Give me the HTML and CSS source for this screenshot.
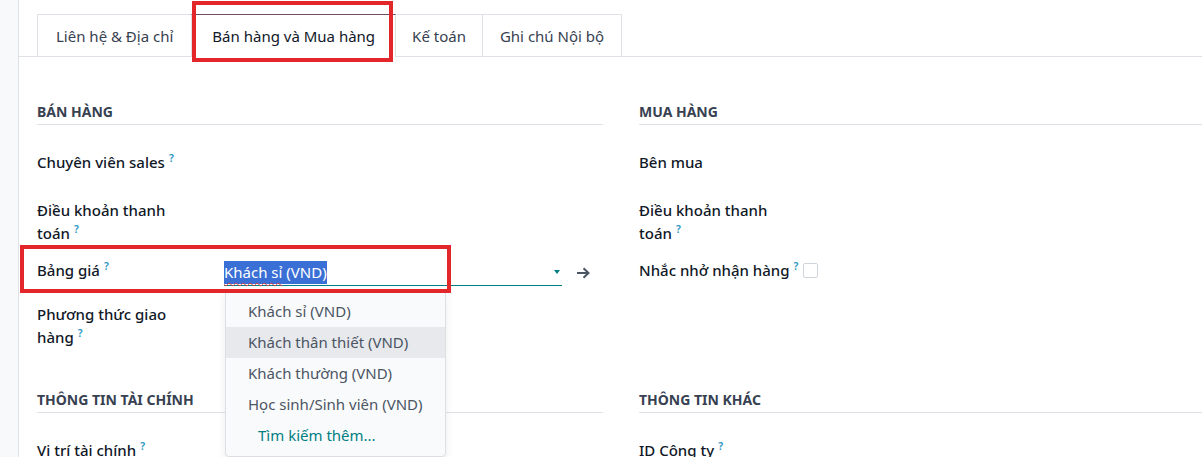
FILE: index.html
```html
<!DOCTYPE html>
<html lang="vi">
<head>
<meta charset="utf-8">
<title>Bán hàng và Mua hàng</title>
<link rel="stylesheet" href="styles.css">
</head>
<body>
<div class="app">
  <aside class="rail"></aside>
  <main class="sheet">
    <nav class="tabs">
      <a class="tab">Liên hệ &amp; Địa chỉ</a>
      <a class="tab active">Bán hàng và Mua hàng</a>
      <a class="tab">Kế toán</a>
      <a class="tab">Ghi chú Nội bộ</a>
      <span class="mark mark-tab"></span>
    </nav>
    <div class="groups">
      <section class="group">
        <h3 class="group-title">Bán hàng</h3>
        <div class="field">
          <div class="label">Chuyên viên sales<sup>?</sup></div>
          <div class="value"></div>
        </div>
        <div class="field">
          <div class="label">Điều khoản thanh toán<sup>?</sup></div>
          <div class="value"></div>
        </div>
        <div class="field field-input">
          <span class="mark mark-field"></span>
          <div class="label">Bảng giá<sup>?</sup></div>
          <div class="value value-input">
            <div class="input-wrap">
              <div class="input"><span class="sel"><span class="spell">Khách sỉ</span> (VND)</span><span class="caret"></span></div>
              <svg class="open-arrow" width="14" height="12" viewBox="0 0 14 12"><path d="M1 6H12.5M7.5 1.2L12.5 6L7.5 10.8" fill="none" stroke="#4b5563" stroke-width="2"/></svg>
            </div>
            <ul class="dropdown">
              <li>Khách sỉ (VND)</li>
              <li class="hover">Khách thân thiết (VND)</li>
              <li>Khách thường (VND)</li>
              <li>Học sinh/Sinh viên (VND)</li>
              <li class="more">Tìm kiếm thêm...</li>
            </ul>
          </div>
        </div>
        <div class="field last">
          <div class="label">Phương thức giao hàng<sup>?</sup></div>
          <div class="value"></div>
        </div>
      </section>
      <section class="group">
        <h3 class="group-title">Mua hàng</h3>
        <div class="field">
          <div class="label">Bên mua</div>
          <div class="value"></div>
        </div>
        <div class="field">
          <div class="label">Điều khoản thanh toán<sup>?</sup></div>
          <div class="value"></div>
        </div>
        <div class="field field-check last">
          <div class="label">Nhắc nhở nhận hàng<sup>?</sup></div>
          <span class="checkbox"></span>
        </div>
      </section>
      <section class="group">
        <h3 class="group-title">Thông tin tài chính</h3>
        <div class="field">
          <div class="label">Vị trí tài chính<sup>?</sup></div>
          <div class="value"></div>
        </div>
      </section>
      <section class="group">
        <h3 class="group-title">Thông tin khác</h3>
        <div class="field">
          <div class="label">ID Công ty<sup>?</sup></div>
          <div class="value"></div>
        </div>
      </section>
    </div>
  </main>
</div>
</body>
</html>
```

FILE: styles.css
```css
* { box-sizing: border-box; }
html, body {
  margin: 0;
  height: 457px;
  overflow: hidden;
  background: #fff;
}
body {
  font-family: "Noto Sans", "Open Sans", sans-serif;
  font-size: 15px;
  color: #111827;
}
.app {
  display: flex;
  height: 457px;
}
.rail {
  flex: none;
  width: 19px;
  background: #f8f9fa;
  border-right: 1px solid #dee2e6;
}
.sheet {
  flex: 1;
  min-width: 0;
  position: relative;
}
.tabs {
  position: relative;
  display: flex;
  align-items: flex-start;
  height: 57px;
  padding: 14px 0 0 18px;
  border-bottom: 1px solid #dee2e6;
}
.tab {
  display: flex;
  align-items: center;
  height: 42px;
  padding: 1px 18px 0;
  margin-right: -1px;
  border: 1px solid #dee2e6;
  border-bottom: none;
  color: #374151;
  background: #fff;
  white-space: nowrap;
}
.tab.active {
  height: 43px;
  margin-bottom: -1px;
  padding: 0 20px;
  border-top: 1px solid #714b67;
  color: #111827;
  position: relative;
  z-index: 1;
}
.tab:nth-child(3) { padding: 1px 16px 0; }
.tab:nth-child(4) { padding: 1px 17px 0; }
.mark {
  position: absolute;
  border: 4px solid #e3262a;
  pointer-events: none;
  z-index: 5;
}
.mark-tab {
  left: 173px;
  top: 1px;
  width: 201px;
  height: 61px;
}
.groups {
  display: grid;
  grid-template-columns: 566px 566px;
  column-gap: 36px;
  row-gap: 40px;
  padding: 44px 0 0 18px;
}
.group-title {
  margin: 0 0 26px;
  padding-bottom: 2px;
  border-bottom: 1px solid #dee2e6;
  font-size: 14px;
  line-height: 21px;
  font-weight: 700;
  text-transform: uppercase;
  color: #374151;
}
.field {
  position: relative;
  display: grid;
  grid-template-columns: 187px 1fr;
  margin-bottom: 14px;
  line-height: 23px;
}
.field.last { margin-bottom: 0; }
.label {
  max-width: 160px;
  font-weight: 500;
  color: #111827;
}
.label sup {
  margin-left: 4px;
  font-size: 10.5px;
  font-weight: 600;
  color: #2b95c4;
  vertical-align: 6px;
  line-height: 0;
}
.value { min-height: 34px; }
.value-input {
  min-height: 0;
  height: 30px;
  position: relative;
}
.mark-field {
  left: -17px;
  top: -14px;
  width: 431px;
  height: 48px;
}
.input-wrap {
  display: flex;
  align-items: center;
}
.input {
  position: relative;
  display: flex;
  align-items: center;
  width: 338px;
  height: 27px;
  border-bottom: 1px solid #017e84;
  color: #111827;
}
.sel {
  background: #3a6fd5;
  color: #fff;
  line-height: 23px;
}
.spell {
  text-decoration: underline wavy #e53935;
  text-decoration-thickness: 1px;
  text-underline-offset: 4px;
}
.caret {
  position: absolute;
  right: 2px;
  top: 11px;
  border-left: 3.5px solid transparent;
  border-right: 3.5px solid transparent;
  border-top: 4px solid #017e84;
}
.open-arrow {
  margin-left: 14px;
  flex: none;
}
.dropdown {
  position: absolute;
  left: 1px;
  top: 32px;
  width: 221px;
  margin: 0;
  padding: 4px 0 5px;
  list-style: none;
  background: #f9fafb;
  border: 1px solid #dcdfe3;
  border-radius: 0 0 4px 4px;
  box-shadow: 0 3px 8px rgba(0, 0, 0, 0.08);
  z-index: 4;
}
.dropdown li {
  height: 31px;
  line-height: 31px;
  padding-left: 22px;
  color: #4b5563;
  white-space: nowrap;
}
.dropdown li.hover { background: #e7e9ed; }
.dropdown li.more {
  padding-left: 32px;
  color: #017e84;
}
.field-check {
  display: flex;
  align-items: center;
}
.field-check .label { max-width: none; }
.checkbox {
  width: 15px;
  height: 15px;
  margin-left: 5px;
  border: 1px solid #cfd4da;
  border-radius: 2px;
  background: #fff;
}
```
